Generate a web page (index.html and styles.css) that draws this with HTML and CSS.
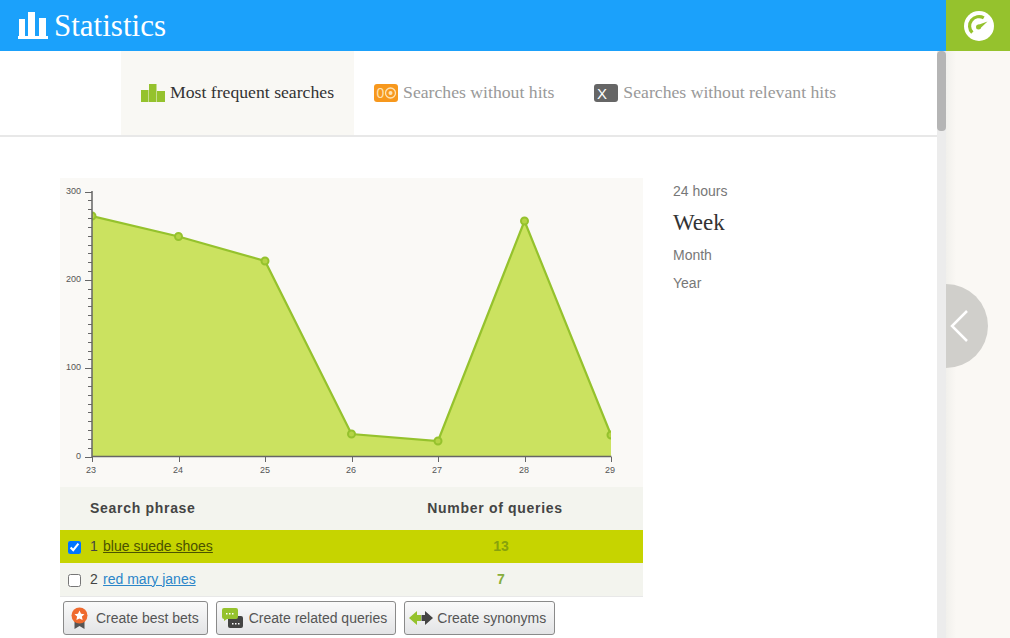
FILE: index.html
```html
<!DOCTYPE html>
<html lang="en">
<head>
  <meta charset="UTF-8">
  <title>Statistics</title>
  <link rel="stylesheet" href="styles.css">
</head>
<body>
  <div class="top-bar">
    <div class="page-title">
      <svg class="title-icon" viewBox="0 0 30 27"><path d="M1 7h6v17H1zM10 0h7v24h-7zM21 6h7v18h-7zM0 24h30v3H0z" fill="#fff"/></svg>
      <h1>Statistics</h1>
    </div>
    <div class="gauge-box">
      <svg class="gauge-icon" viewBox="0 0 30 30">
        <circle cx="15" cy="15" r="15" fill="#fff"/>
        <path d="M8.300 21.700A9.500 9.500 0 0 1 19.800 6.800" fill="none" stroke="#95c22d" stroke-width="3.200"/>
        <path d="M23.500 10.500L13.800 14L15.800 17.800Z" fill="#95c22d"/>
        <circle cx="14.500" cy="16" r="2.500" fill="#95c22d"/>
      </svg>
    </div>
  </div>

  <div class="layout">
    <div class="content">
      <div class="tabs">
        <div class="tab active">
          <svg class="tab-icon" viewBox="0 0 24 18"><path d="M0 6h7.500v12H0zM8 0h7.500v18H8zM16 7h8v11h-8z" fill="#95c22d"/></svg>
          <span>Most frequent searches</span>
        </div>
        <div class="tab">
          <svg class="tab-icon" viewBox="0 0 24 18">
            <rect width="24" height="18" rx="3" fill="#f7981d"/>
            <text x="2.500" y="14" class="badge-zero">0</text>
            <circle cx="16.500" cy="9" r="5" fill="none" stroke="#fde3b5" stroke-width="1.300"/>
            <circle cx="16.500" cy="9" r="2" fill="#fde3b5"/>
          </svg>
          <span>Searches without hits</span>
        </div>
        <div class="tab">
          <svg class="tab-icon" viewBox="0 0 24 18">
            <rect width="24" height="18" rx="3" fill="#666"/>
            <text x="3" y="14.500" class="badge-x">X</text>
          </svg>
          <span>Searches without relevant hits</span>
        </div>
      </div>

      <div class="panel">
        <div class="report">
          <svg class="chart" width="583" height="309" viewBox="0 0 583 309">
            <clipPath id="plot"><rect x="32" y="0" width="519" height="279"/></clipPath>
            <g clip-path="url(#plot)">
              <polygon points="32,278 32,38 118.500,58.500 205,83 291.500,256 378,263 464.500,43 551,257 551,278" fill="#cbe260"/>
              <polyline points="32,38 118.500,58.500 205,83 291.500,256 378,263 464.500,43 551,257" fill="none" stroke="#95c22d" stroke-width="2.200"/>
              <g fill="#b5d445" stroke="#95c22d" stroke-width="2">
                <circle cx="32" cy="38" r="3.500"/>
                <circle cx="118.500" cy="58.500" r="3.500"/>
                <circle cx="205" cy="83" r="3.500"/>
                <circle cx="291.500" cy="256" r="3.500"/>
                <circle cx="378" cy="263" r="3.500"/>
                <circle cx="464.500" cy="43" r="3.500"/>
                <circle cx="551" cy="257" r="3.500"/>
              </g>
            </g>
            <path d="M32 13V279M31.500 278.500H551.500" fill="none" stroke="#666" stroke-width="1.500"/>
            <path id="ticks" fill="none" stroke="#666" stroke-width="1" d=""/>
            <g class="axis-label" text-anchor="end">
              <text x="21" y="16">300</text>
              <text x="21" y="104">200</text>
              <text x="21" y="192">100</text>
              <text x="21" y="281">0</text>
            </g>
            <g class="axis-label" text-anchor="middle">
              <text x="31" y="295">23</text>
              <text x="118" y="295">24</text>
              <text x="205" y="295">25</text>
              <text x="291" y="295">26</text>
              <text x="377" y="295">27</text>
              <text x="464" y="295">28</text>
              <text x="550" y="295">29</text>
            </g>
          </svg>

          <table class="results">
            <thead>
              <tr>
                <th class="col-phrase">Search phrase</th>
                <th class="col-count">Number of queries</th>
              </tr>
            </thead>
            <tbody>
              <tr class="selected">
                <td><input type="checkbox" checked> <span class="num">1</span> <a href="#">blue suede shoes</a></td>
                <td class="count">13</td>
              </tr>
              <tr>
                <td><input type="checkbox"> <span class="num">2</span> <a href="#">red mary janes</a></td>
                <td class="count">7</td>
              </tr>
            </tbody>
          </table>

          <div class="actions">
            <button>
              <svg class="btn-icon" viewBox="0 0 18 22">
                <path d="M4 12v10l5-3 5 3V12z" fill="#555"/>
                <circle cx="9" cy="8.500" r="8" fill="#ef6a2e"/>
                <path d="M9 3.500l1.500 3.300 3.500.4-2.600 2.400.7 3.500L9 11.400l-3.100 1.700.7-3.500L4 7.200l3.500-.4z" fill="#fff"/>
              </svg>
              Create best bets
            </button>
            <button>
              <svg class="btn-icon" viewBox="0 0 21 20">
                <rect x="6" y="8" width="15" height="12" rx="2" fill="#444"/>
                <path d="M2 0h12a2 2 0 0 1 2 2v7a2 2 0 0 1-2 2H5l-3 2v-2a2 2 0 0 1-2-2V2a2 2 0 0 1 2-2z" fill="#95c22d"/>
                <path d="M4 5h1.500v1.500H4zM7 5h1.500v1.500H7zM10 5h1.500v1.500H10z" fill="#fff"/>
                <path d="M10 15h1.500v1.500H10zM13 15h1.500v1.500H13zM16 15h1.500v1.500H16z" fill="#fff"/>
              </svg>
              Create related queries
            </button>
            <button>
              <svg class="btn-icon-wide" viewBox="0 0 24 14">
                <path d="M0 7l8-7v4h4v6H8v4z" fill="#95c22d"/>
                <path d="M24 7l-8-7v4h-3.500v6H16v4z" fill="#444"/>
              </svg>
              Create synonyms
            </button>
          </div>
        </div>

        <ul class="periods">
          <li>24 hours</li>
          <li class="current">Week</li>
          <li>Month</li>
          <li>Year</li>
        </ul>
      </div>
    </div>

    <div class="scrollbar"><div class="scroll-thumb"></div></div>

    <div class="side">
      <div class="side-handle">
        <svg class="chevron" viewBox="0 0 18 32"><path d="M17 1L2 16l15 15" fill="none" stroke="#fff" stroke-width="2.500"/></svg>
      </div>
    </div>
  </div>

  <script>
    // y axis ticks, one every 10 units, longer on the hundreds
    var d = '';
    for (var i = 0; i <= 30; i++) {
      var y = Math.round(278.5 - i * 8.83) + 0.5;
      d += 'M' + (i % 10 === 0 ? 25 : 28) + ' ' + y + 'H32';
    }
    for (var j = 0; j < 7; j++) {
      var x = Math.round(32 + j * 86.5) + 0.5;
      d += 'M' + x + ' 279V284';
    }
    document.getElementById('ticks').setAttribute('d', d);
  </script>
</body>
</html>
```

FILE: styles.css
```css
html, body {
  height: 100%;
}
body {
  margin: 0;
  height: 638px;
  overflow: hidden;
  background: #fff;
  color: #444;
  font-family: 'Liberation Sans', Arial, sans-serif;
  font-size: 14px;
}
.top-bar {
  display: flex;
  height: 51px;
}
.page-title {
  flex: 1;
  display: flex;
  align-items: center;
  gap: 6px;
  padding-left: 18px;
  background: #1ba1fb;
}
.title-icon {
  width: 30px;
  height: 27px;
}
.page-title h1 {
  margin: 0;
  color: #fff;
  font-family: 'Liberation Serif', Georgia, serif;
  font-size: 31px;
  font-weight: normal;
}
.gauge-box {
  width: 64px;
  display: flex;
  align-items: center;
  justify-content: center;
  padding-left: 2px;
  box-sizing: border-box;
  background: #95c22d;
}
.gauge-icon {
  width: 30px;
  height: 30px;
}
.layout {
  display: flex;
  height: 587px;
}
.content {
  width: 937px;
}
.tabs {
  display: flex;
  height: 84px;
  padding-left: 121px;
  border-bottom: 2px solid #e8e8e8;
  font-family: 'Liberation Serif', Georgia, serif;
  font-size: 17.7px;
  color: #999;
}
.tab {
  display: flex;
  align-items: center;
  gap: 5px;
  padding: 0 20px;
}
.tab span {
  margin-bottom: 2px;
}
.tab.active {
  background: #f9f8f4;
  color: #333;
}
.tab-icon {
  width: 24px;
  height: 18px;
}
.badge-zero {
  fill: #fde3b5;
  font-family: 'Liberation Sans', Arial, sans-serif;
  font-size: 14px;
}
.badge-x {
  fill: #fff;
  font-family: 'Liberation Sans', Arial, sans-serif;
  font-size: 15px;
}
.panel {
  display: flex;
  padding: 41px 0 0 60px;
}
.report {
  width: 583px;
}
.chart {
  display: block;
  background: #faf9f6;
}
.axis-label {
  fill: #555;
  font-size: 9px;
}
.results {
  width: 100%;
  border-collapse: collapse;
  table-layout: fixed;
  background: #f3f4ee;
  border-bottom: 1px solid #e8e8e8;
}
.results th {
  height: 43px;
  padding: 0 0 2px;
  box-sizing: border-box;
  font-size: 14px;
  letter-spacing: 0.7px;
  color: #444;
}
.results .col-phrase {
  width: 299px;
  padding-left: 30px;
  text-align: left;
}
.results .col-count {
  padding-right: 12px;
  text-align: center;
}
.results td {
  height: 33px;
  padding: 0 0 1px 8px;
  box-sizing: border-box;
  color: #444;
}
.results input {
  width: 13px;
  height: 13px;
  margin: 0 5px 0 0;
  vertical-align: -3px;
}
.results a {
  margin-left: 1.5px;
  color: #2b86c9;
}
.results .count {
  padding: 0 0 1px;
  text-align: center;
  font-weight: bold;
  color: #87ae3c;
}
.selected td {
  background: #c6d400;
}
.selected a {
  color: #4a5200;
}
.results .selected .count {
  color: #87a20c;
}
.actions {
  display: flex;
  gap: 8px;
  margin-top: 4px;
  padding-left: 3px;
}
.actions button {
  display: flex;
  align-items: center;
  gap: 6px;
  height: 34px;
  padding: 0 8px 0 5px;
  border: 1px solid #8a8a8a;
  border-radius: 3px;
  background: linear-gradient(#fafafa, #e3e4e6);
  color: #555;
  font-family: inherit;
  font-size: 14px;
}
.btn-icon {
  width: 21px;
  height: 22px;
}
.btn-icon-wide {
  width: 24px;
  height: 14px;
  margin: 0 -2px 0 -1px;
}
.periods {
  margin: -1px 0 0 30px;
  padding: 0;
  list-style: none;
  color: #777;
}
.periods li {
  height: 28px;
  line-height: 28px;
}
.periods .current {
  height: 36px;
  line-height: 36px;
  font-family: 'Liberation Serif', Georgia, serif;
  font-size: 23px;
  color: #333;
}
.scrollbar {
  width: 9px;
  background: #ececec;
}
.scroll-thumb {
  height: 80px;
  background: #b5b5b5;
  border-radius: 4px;
}
.side {
  flex: 1;
  position: relative;
  background: linear-gradient(90deg, #f1f0ec 0, #faf8f4 10px);
}
.side-handle {
  position: absolute;
  left: 0;
  top: 233px;
  width: 42px;
  height: 84px;
  display: flex;
  align-items: center;
  background: #d0cfcb;
  border-radius: 0 42px 42px 0;
}
.chevron {
  width: 18px;
  height: 32px;
  margin-left: 4px;
}
```
